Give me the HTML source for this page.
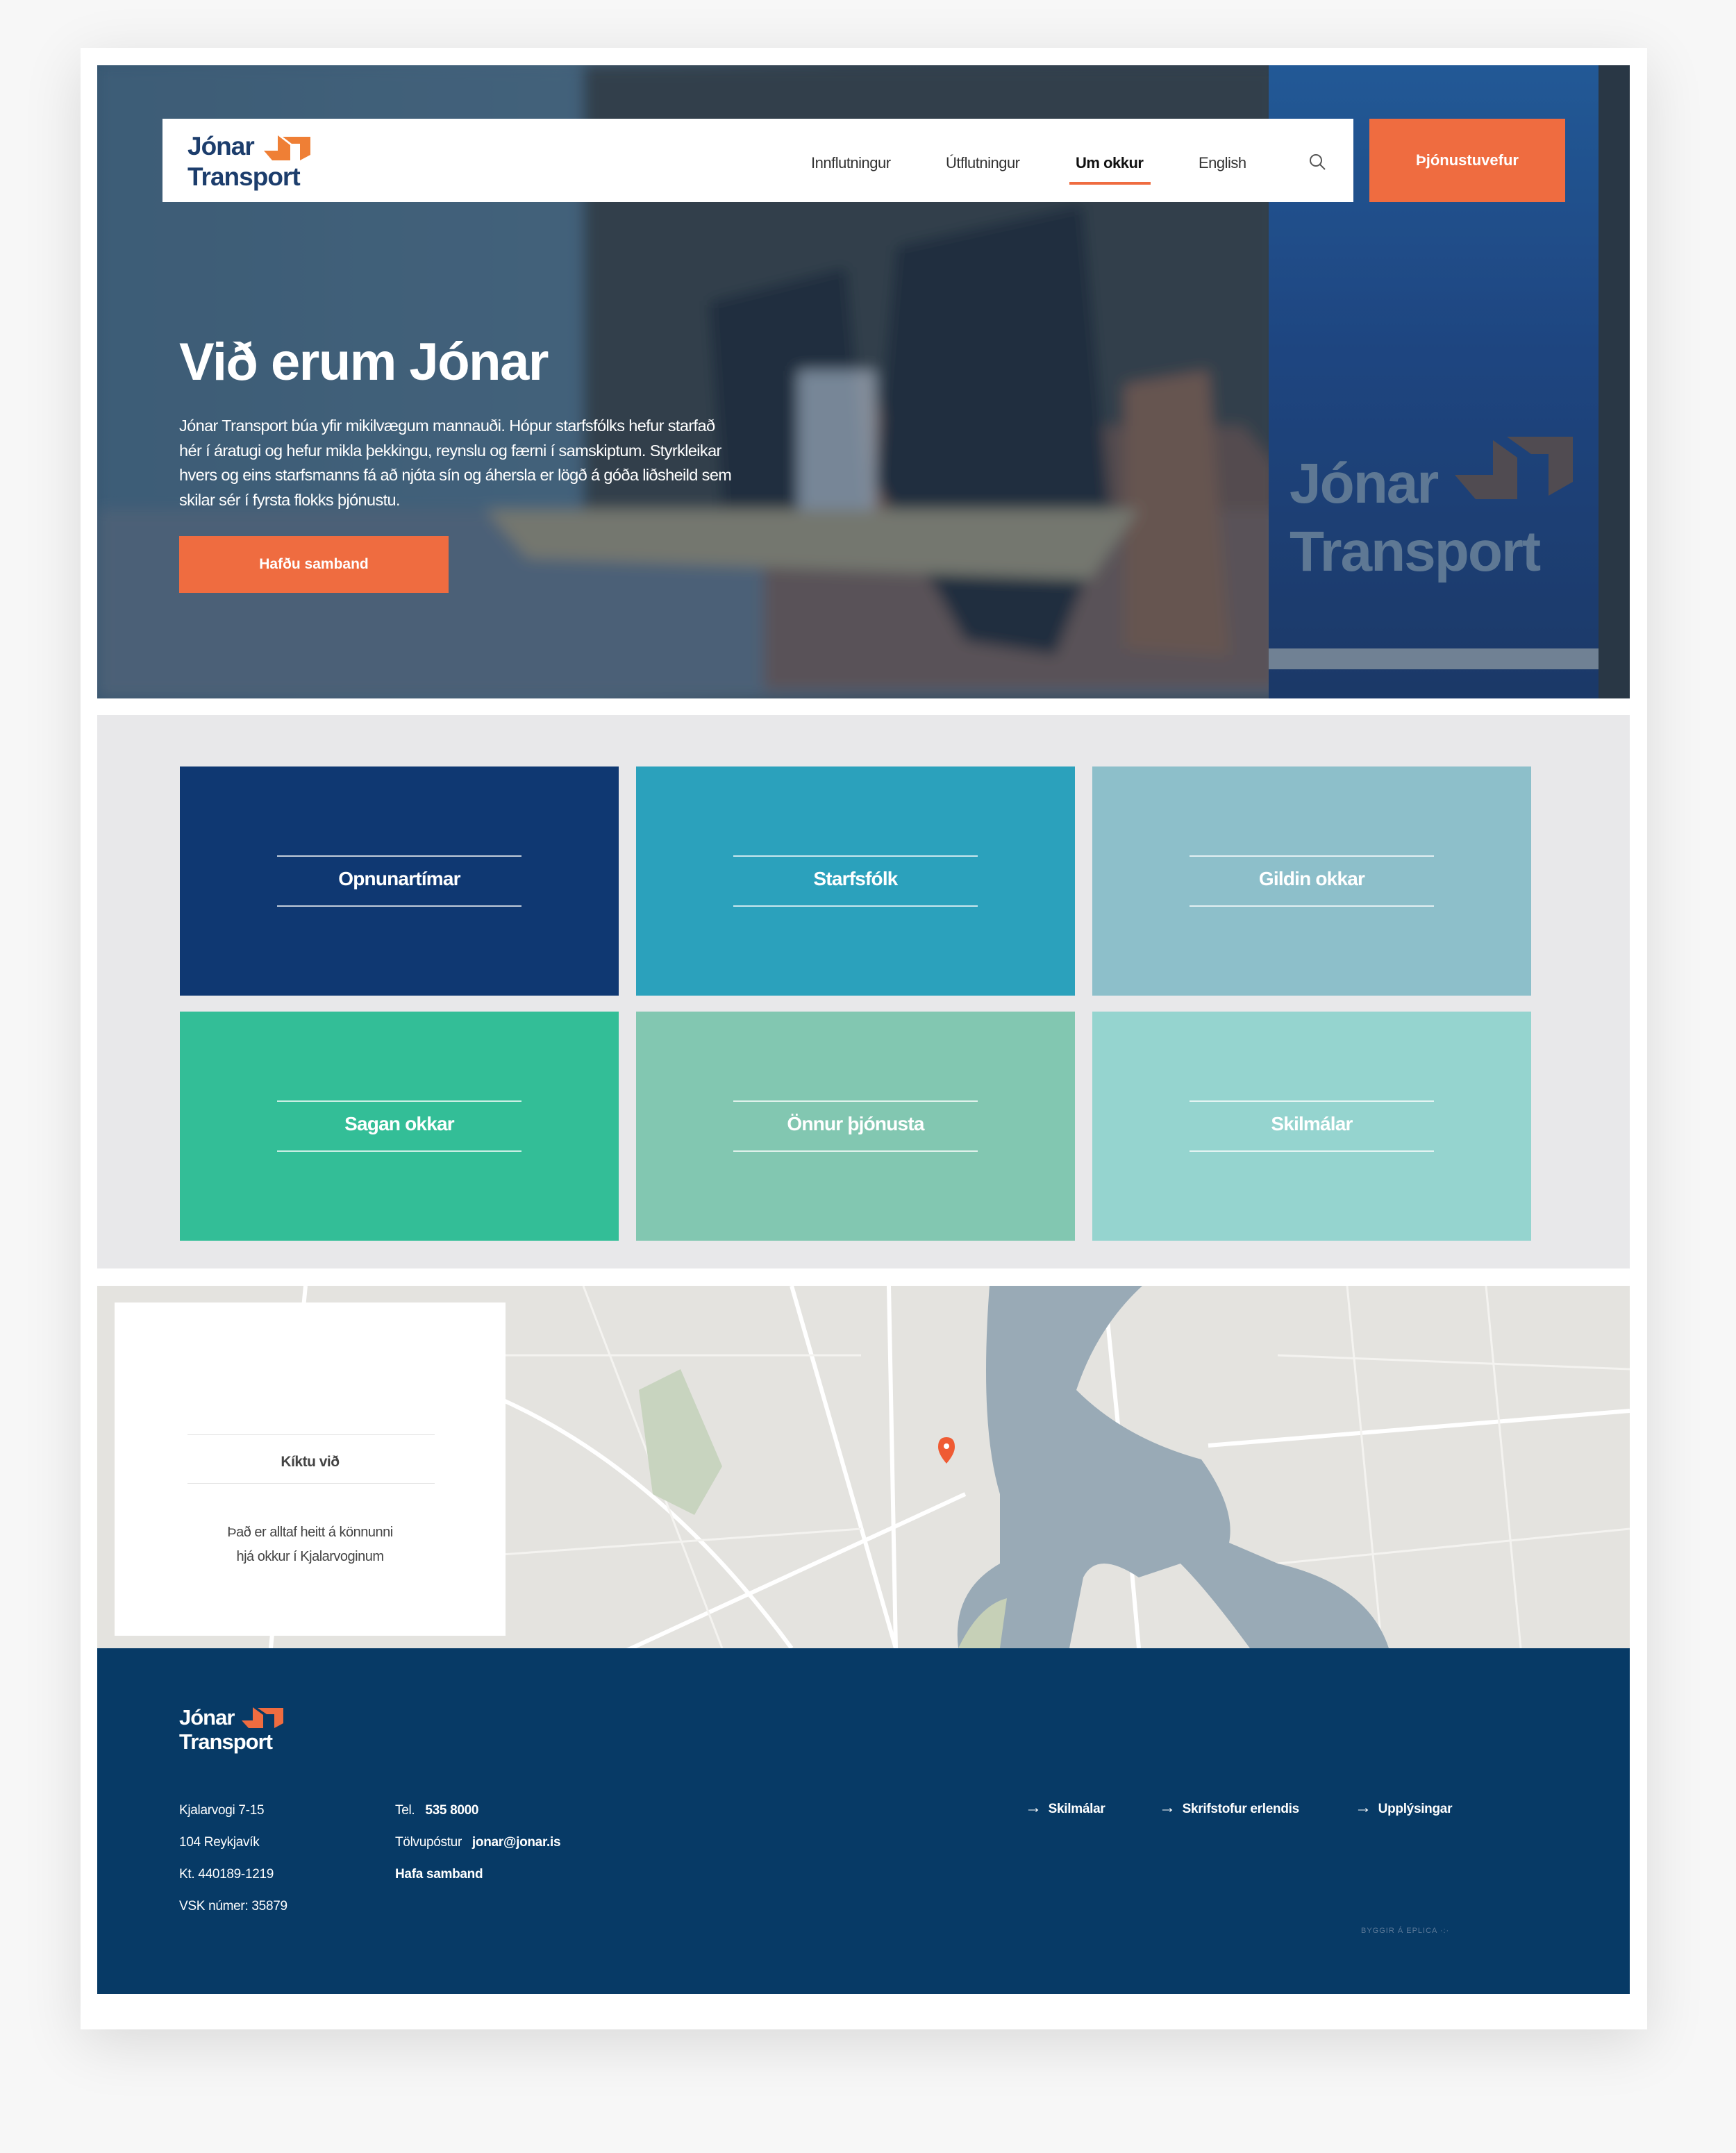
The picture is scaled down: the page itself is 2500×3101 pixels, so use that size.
<!DOCTYPE html>
<html><head><meta charset="utf-8"><style>
*{margin:0;padding:0;box-sizing:border-box}
body{width:2500px;height:3101px;background:#f7f7f7;font-family:"Liberation Sans",sans-serif;position:relative;overflow:hidden}
.abs{position:absolute}
.card{left:116px;top:69px;width:2256px;height:2854px;background:#fff;box-shadow:0 20px 80px rgba(0,0,0,.12)}
.hero{left:140px;top:94px;width:2207px;height:912px;overflow:hidden;background:#2f4b63}
.nav{left:234px;top:171px;width:1715px;height:120px;background:#fff}
.navi{top:222px;font-size:22px;color:#333;letter-spacing:-0.5px}
.btn{background:#ef6c40;color:#fff;font-weight:bold;text-align:center}
.tile{width:632px;height:330px}
.tile .l1,.tile .l2{position:absolute;left:140px;width:352px;height:2px;background:rgba(255,255,255,.75)}
.tile .l1{top:128px}.tile .l2{top:200px}
.tile .t{position:absolute;left:0;width:100%;top:146px;text-align:center;color:#fff;font-weight:bold;font-size:28px;letter-spacing:-0.8px}
.ft{color:#fff;font-size:19px;letter-spacing:-0.3px}
</style></head><body>
<div class="abs card"></div>
<div class="abs hero">
 <svg width="2207" height="912" style="position:absolute;left:0;top:0">
  <defs><linearGradient id="wall" x1="0" x2="1"><stop offset="0" stop-color="#3a5a73"/><stop offset=".3" stop-color="#4d6b80"/><stop offset=".5" stop-color="#36434e"/><stop offset="1" stop-color="#2e3a44"/></linearGradient>
  <linearGradient id="ban" x1="0" y1="0" x2="0" y2="1"><stop offset="0" stop-color="#1f5fa6"/><stop offset=".45" stop-color="#1a4589"/><stop offset="1" stop-color="#163468"/></linearGradient>
  <filter id="bl"><feGaussianBlur stdDeviation="10"/></filter></defs>
  <rect width="2207" height="912" fill="url(#wall)"/>
  <g filter="url(#bl)">
  <rect x="0" y="0" width="700" height="912" fill="#4a6a82" opacity=".6"/>
  <rect x="700" y="0" width="1000" height="640" fill="#343c42"/>
  <rect x="0" y="640" width="2207" height="272" fill="#56697b"/>
  <path d="M960 580 L1050 520 L1650 520 L1700 580 L1700 900 L960 900Z" fill="#6e5348" opacity=".8"/>
  <path d="M900 480 L1110 440 L1180 700 L900 720Z" fill="#7a5a48"/>
  <path d="M1480 460 L1600 440 L1630 850 L1480 840Z" fill="#7a5a48"/>
  <path d="M1150 260 L1420 200 L1460 650 L1380 850 L1250 830 L1120 600Z" fill="#1d2733"/>
  <path d="M880 340 L1080 290 L1110 640 L900 640Z" fill="#1c2530"/>
  <path d="M560 640 L1500 640 L1430 740 L620 710Z" fill="#8d8772"/>
  <rect x="1010" y="440" width="110" height="200" fill="#aeb9c6" opacity=".8"/>
  </g>
  <rect x="1687" y="0" width="600" height="912" fill="#28323a"/>
  <rect x="1687" y="0" width="475" height="912" fill="url(#ban)"/>
  <rect x="1687" y="840" width="475" height="30" fill="#8795a3"/>
  <text x="1717" y="630" font-family="Liberation Sans" font-weight="bold" font-size="82" fill="#6f88a3" letter-spacing="-2">Jónar</text>
  <text x="1717" y="728" font-family="Liberation Sans" font-weight="bold" font-size="82" fill="#6f88a3" letter-spacing="-2">Transport</text>
  <path d="M1955 590 L2010 590 L2010 540 L2045 565 L2045 625 L1985 625Z" fill="#5d4d4a"/>
  <path d="M2030 535 L2125 535 L2125 600 L2090 620 L2090 560 L2065 560Z" fill="#5d4d4a"/>
  <rect width="2207" height="912" fill="#2b4866" opacity=".25"/>
 </svg>
</div>
<div class="abs nav"></div>
<svg class="abs" style="left:270px;top:187px" width="190" height="90">
 <text x="0" y="36" font-family="Liberation Sans" font-weight="bold" font-size="37" fill="#1c3d6c" letter-spacing="-1">Jónar</text>
 <text x="0" y="80" font-family="Liberation Sans" font-weight="bold" font-size="37" fill="#1c3d6c" letter-spacing="-1">Transport</text>
 <path d="M110 30 L130 30 L130 8 L148 22 L148 44 L122 44Z" fill="#ef7f35"/>
 <path d="M137 10 L177 10 L177 36 L162 44 L162 20 L150 20Z" fill="#ef7f35"/>
</svg>
<div class="abs navi" style="left:1168px">Innflutningur</div>
<div class="abs navi" style="left:1362px">Útflutningur</div>
<div class="abs navi" style="left:1549px;font-weight:bold;color:#111">Um okkur</div>
<div class="abs" style="left:1540px;top:262px;width:117px;height:4px;background:#ef6c40"></div>
<div class="abs navi" style="left:1726px">English</div>
<svg class="abs" style="left:1883px;top:220px" width="28" height="28"><circle cx="12" cy="11" r="8" fill="none" stroke="#555" stroke-width="2"/><path d="M18 17 L25 24" stroke="#555" stroke-width="2"/></svg>
<div class="abs btn" style="left:1972px;top:171px;width:282px;height:120px;line-height:120px;font-size:22px">Þjónustuvefur</div>
<div class="abs" style="left:258px;top:478px;color:#fff;font-weight:bold;font-size:76px;letter-spacing:-1.5px">Við erum Jónar</div>
<div class="abs" style="left:258px;top:596px;color:#fff;font-size:23.5px;line-height:35.5px;letter-spacing:-0.6px">Jónar Transport búa yfir mikilvægum mannauði. Hópur starfsfólks hefur starfað<br>hér í áratugi og hefur mikla þekkingu, reynslu og færni í samskiptum. Styrkleikar<br>hvers og eins starfsmanns fá að njóta sín og áhersla er lögð á góða liðsheild sem<br>skilar sér í fyrsta flokks þjónustu.</div>
<div class="abs btn" style="left:258px;top:772px;width:388px;height:82px;line-height:82px;font-size:21px">Hafðu samband</div>

<div class="abs" style="left:140px;top:1030px;width:2207px;height:797px;background:#e8e8ea"></div>
<div class="abs tile" style="left:259px;top:1104px;background:#0f3872"><div class="l1"></div><div class="t">Opnunartímar</div><div class="l2"></div></div>
<div class="abs tile" style="left:916px;top:1104px;background:#2ba1bc"><div class="l1"></div><div class="t">Starfsfólk</div><div class="l2"></div></div>
<div class="abs tile" style="left:1573px;top:1104px;background:#8dbfca"><div class="l1"></div><div class="t">Gildin okkar</div><div class="l2"></div></div>
<div class="abs tile" style="left:259px;top:1457px;background:#33be97"><div class="l1"></div><div class="t">Sagan okkar</div><div class="l2"></div></div>
<div class="abs tile" style="left:916px;top:1457px;background:#82c7b1"><div class="l1"></div><div class="t">Önnur þjónusta</div><div class="l2"></div></div>
<div class="abs tile" style="left:1573px;top:1457px;background:#95d4cf"><div class="l1"></div><div class="t">Skilmálar</div><div class="l2"></div></div>

<svg class="abs" style="left:140px;top:1852px" width="2207" height="522">
 <rect width="2207" height="522" fill="#e4e3df"/>
 <g stroke="#fff" stroke-width="6" fill="none">
  <path d="M1000 0 L1150 522"/><path d="M1140 0 L1150 522"/><path d="M550 150 Q800 250 1000 522"/><path d="M600 600 L1250 300"/><path d="M1450 0 L1480 300 L1500 522"/><path d="M1600 230 L2207 180"/><path d="M1500 300 L1700 522"/><path d="M300 0 L250 522"/>
 </g>
 <g stroke="#f4f3f0" stroke-width="3" fill="none">
  <path d="M700 0 L900 522"/><path d="M420 100 L1100 100"/><path d="M400 400 L1100 350"/><path d="M1700 100 L2207 120"/><path d="M1700 400 L2207 350"/><path d="M1800 0 L1850 522"/><path d="M2000 0 L2050 522"/>
 </g>
 <path d="M780 150 L840 120 L900 260 L860 330 L800 300Z" fill="#c8d4bf"/>
 <path d="M1285 0 L1505 0 Q1440 60 1410 150 Q1480 220 1590 250 Q1640 320 1630 370 L1700 400 Q1830 430 1860 522 L1660 522 Q1600 440 1560 400 L1500 420 Q1440 380 1420 420 L1400 522 L1240 522 Q1230 440 1300 400 L1300 300 Q1270 200 1285 0Z" fill="#99aab6"/>
 <path d="M1240 522 Q1270 460 1310 450 L1300 522Z" fill="#c6d0b7"/>
 <path d="M1223 218 q-12 0 -12 14 q0 10 12 24 q12 -14 12 -24 q0 -14 -12 -14z" fill="#ef5b33"/><circle cx="1223" cy="231" r="4" fill="#fff"/>
</svg>
<div class="abs" style="left:165px;top:1876px;width:563px;height:480px;background:#fff"></div>
<div class="abs" style="left:270px;top:2066px;width:356px;height:1px;background:#e2e2e2"></div>
<div class="abs" style="left:165px;top:2094px;width:563px;text-align:center;font-weight:bold;font-size:21px;color:#444;letter-spacing:-0.5px">Kíktu við</div>
<div class="abs" style="left:270px;top:2136px;width:356px;height:1px;background:#e2e2e2"></div>
<div class="abs" style="left:165px;top:2190px;width:563px;text-align:center;font-size:20px;line-height:35px;color:#444;letter-spacing:-0.5px">Það er alltaf heitt á könnunni<br>hjá okkur í Kjalarvoginum</div>

<div class="abs" style="left:140px;top:2374px;width:2207px;height:498px;background:#073a66"></div>
<svg class="abs" style="left:258px;top:2452px" width="170" height="80">
 <text x="0" y="32" font-family="Liberation Sans" font-weight="bold" font-size="31" fill="#fff" letter-spacing="-1">Jónar</text>
 <text x="0" y="67" font-family="Liberation Sans" font-weight="bold" font-size="31" fill="#fff" letter-spacing="-1">Transport</text>
 <path d="M90 26 L106 26 L106 7 L121 18 L121 37 L100 37Z" fill="#ef6c40"/>
 <path d="M113 8 L150 8 L150 30 L137 37 L137 17 L126 17Z" fill="#ef6c40"/>
</svg>
<div class="abs ft" style="left:258px;top:2585px;line-height:46px">Kjalarvogi 7-15<br>104 Reykjavík<br>Kt. 440189-1219<br>VSK númer: 35879</div>
<div class="abs ft" style="left:569px;top:2585px;line-height:46px">Tel.&nbsp;&nbsp; <b>535 8000</b><br>Tölvupóstur&nbsp;&nbsp; <b>jonar@jonar.is</b><br><b>Hafa samband</b></div>
<div class="abs ft" style="left:1476px;top:2590px;font-weight:bold"><span style="font-weight:normal;font-size:24px">→</span>&nbsp; Skilmálar</div>
<div class="abs ft" style="left:1669px;top:2590px;font-weight:bold"><span style="font-weight:normal;font-size:24px">→</span>&nbsp; Skrifstofur erlendis</div>
<div class="abs ft" style="left:1951px;top:2590px;font-weight:bold"><span style="font-weight:normal;font-size:24px">→</span>&nbsp; Upplýsingar</div>
<div class="abs" style="left:1960px;top:2775px;font-size:11px;color:#5d7a99;letter-spacing:1px">BYGGIR Á EPLICA ·:·</div>
</body></html>
